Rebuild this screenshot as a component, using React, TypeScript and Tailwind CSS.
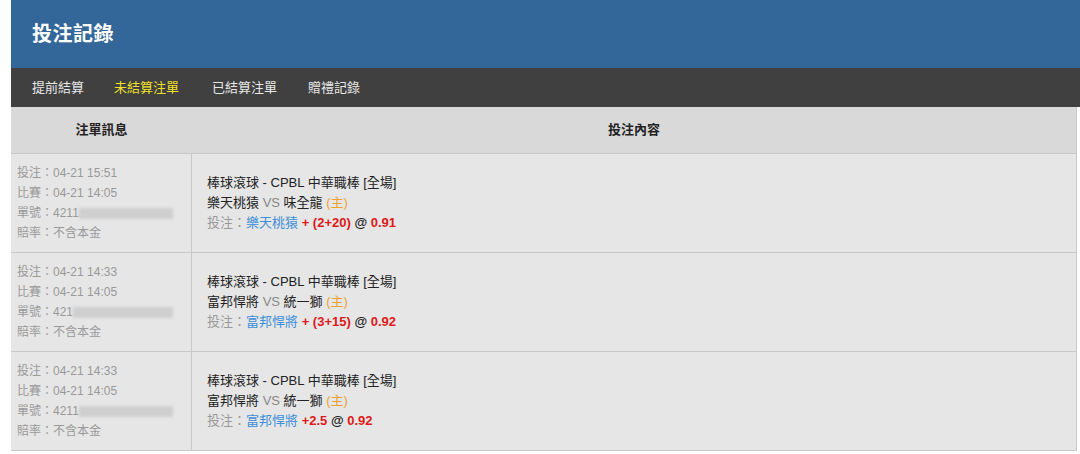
import React from "react";

const rows = [
  { bet: "04-21 15:51", game: "04-21 14:05", no: "4211", blurW: "w-[94px]", home: "樂天桃猿", away: "味全龍", pick: "樂天桃猿", line: "+ (2+20)", odds: "0.91" },
  { bet: "04-21 14:33", game: "04-21 14:05", no: "421", blurW: "w-[100px]", home: "富邦悍將", away: "統一獅", pick: "富邦悍將", line: "+ (3+15)", odds: "0.92" },
  { bet: "04-21 14:33", game: "04-21 14:05", no: "4211", blurW: "w-[94px]", home: "富邦悍將", away: "統一獅", pick: "富邦悍將", line: "+2.5", odds: "0.92" },
];

const font = { fontFamily: '"Liberation Sans", Arial, "Noto Sans CJK TC", sans-serif' };

export default function App() {
  return (
    <div className="w-[1080px] h-[454px] overflow-hidden bg-white pl-[11px]" style={font}>
      <div className="h-[68px] bg-[#336699] flex items-center pl-[21px]">
        <span className="text-white text-[20px] font-bold tracking-[0.5px]">投注記錄</span>
      </div>
      <div className="h-[39px] bg-[#404040] flex items-center pl-[21px] text-[13px] text-[#e8e8e8]">
        <span>提前結算</span>
        <span className="ml-[30px] text-[#f2e12a]">未結算注單</span>
        <span className="ml-[33px]">已結算注單</span>
        <span className="ml-[31px]">贈禮記錄</span>
      </div>
      <div className="w-[1066px] border-r border-[#c8c8c8]">
        <div className="h-[47px] bg-[#d9d9d9] flex border-b border-[#c8c8c8] text-[13px] font-bold text-[#222]">
          <div className="w-[181px] flex items-center justify-center">注單訊息</div>
          <div className="flex-1 flex items-center justify-center">投注內容</div>
        </div>
        {rows.map((r, i) => (
          <div key={i} className="h-[99px] bg-[#e6e6e6] flex border-b border-[#c8c8c8] text-[13px] leading-[20px]">
            <div className="w-[181px] shrink-0 border-r border-[#c8c8c8] flex flex-col justify-center pl-[6px] text-[12px] text-[#999] whitespace-nowrap">
              <div>投注：{r.bet}</div>
              <div>比賽：{r.game}</div>
              <div className="flex items-center whitespace-nowrap">
                <span className="shrink-0">單號：{r.no}</span>
                <span className={`${r.blurW} shrink-0 h-[11px] bg-[#cfcfcf] blur-[1.5px] inline-block`}></span>
              </div>
              <div>賠率：不含本金</div>
            </div>
            <div className="flex-1 flex flex-col justify-center pl-[15px] text-[#222]">
              <div>棒球滾球 - CPBL 中華職棒 [全場]</div>
              <div>
                {r.home} <span className="text-[#888]">VS</span> {r.away} <span className="text-[#f0a030]">(主)</span>
              </div>
              <div>
                <span className="text-[#999]">投注：</span>
                <span className="text-[#3d8fd8]">{r.pick}</span>{" "}
                <span className="text-[#e01818] font-bold">{r.line}</span>{" "}
                <span className="font-bold text-[#222]">@</span>{" "}
                <span className="text-[#e01818] font-bold">{r.odds}</span>
              </div>
            </div>
          </div>
        ))}
      </div>
    </div>
  );
}
